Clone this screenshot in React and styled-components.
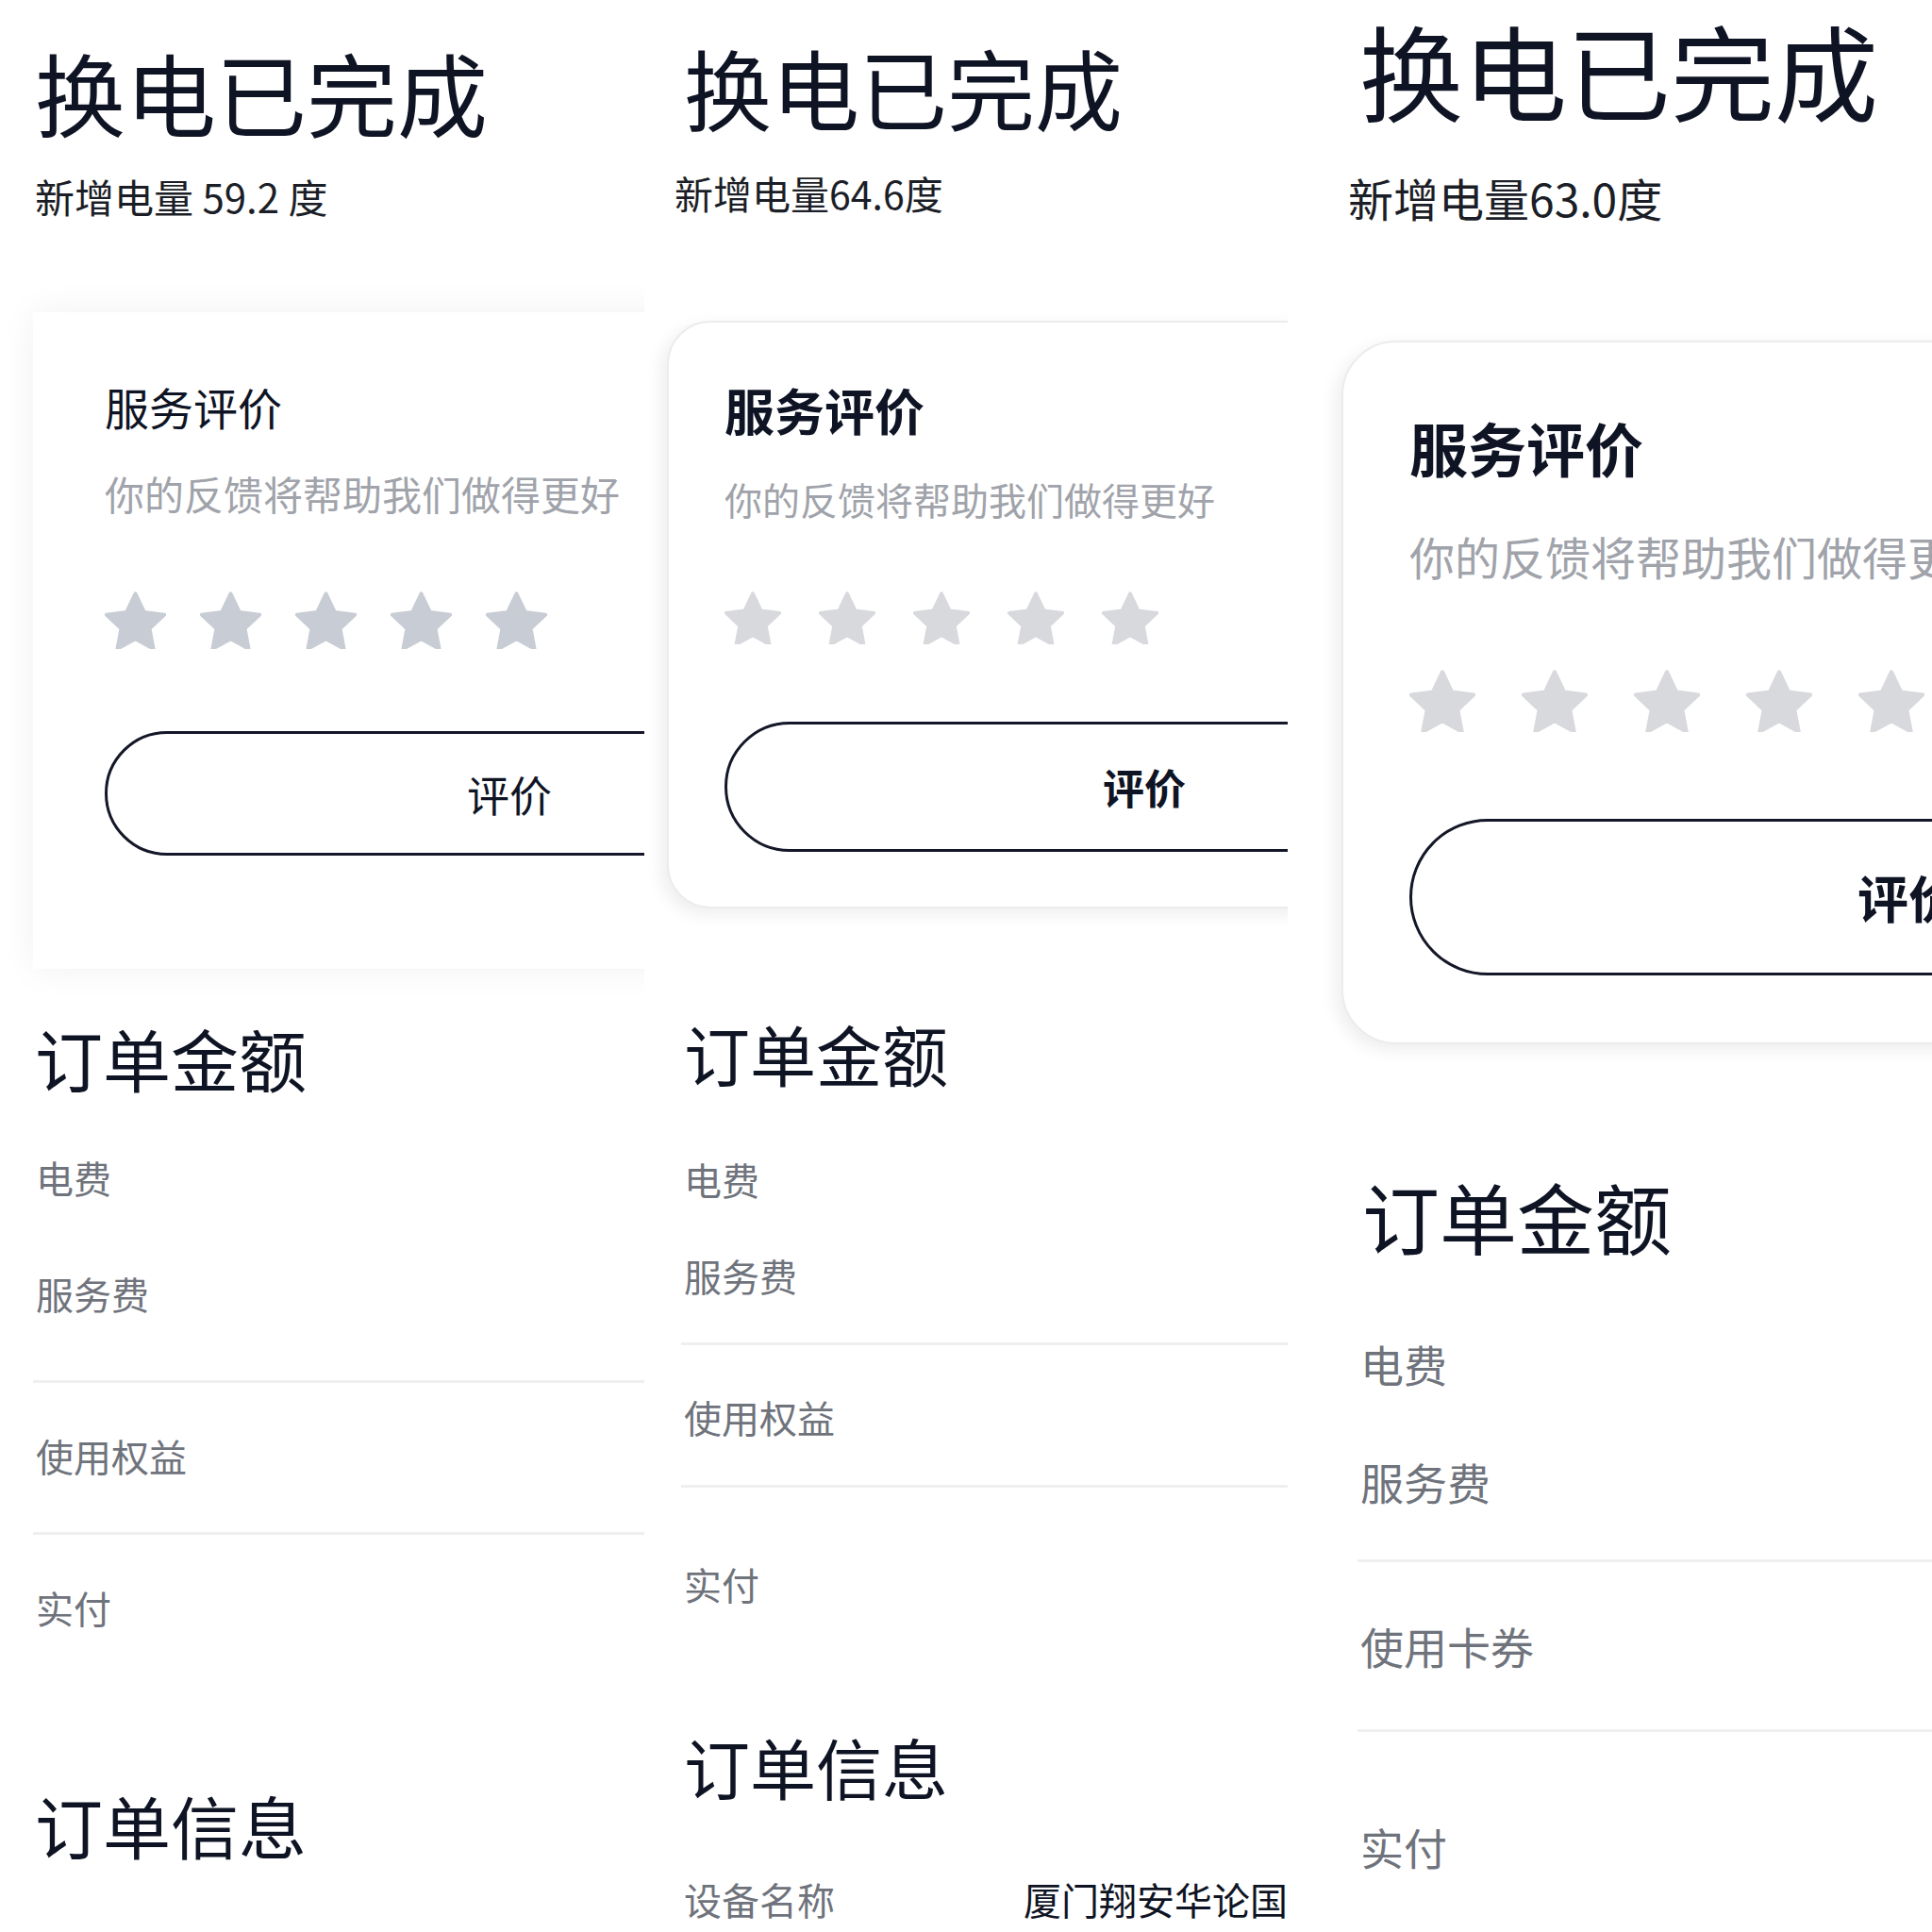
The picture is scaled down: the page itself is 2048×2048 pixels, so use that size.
import React from "react";
import styled, { createGlobalStyle } from "styled-components";

const GlobalStyle = createGlobalStyle`
  html, body {
    margin: 0;
    padding: 0;
    background: #ffffff;
  }
  body {
    font-family: "Noto Sans CJK SC", "Noto Sans", sans-serif;
    color: #0f1424;
  }
`;

const Page = styled.div`
  width: 2048px;
  height: 2048px;
  display: grid;
  grid-template-columns: 683px 682px 683px;
  background: #ffffff;
  overflow: hidden;
`;

const Column = styled.div`
  position: relative;
  overflow: hidden;
  height: 2048px;
  display: flex;
  flex-direction: column;
  align-items: flex-start;
`;

const Title = styled.h1`
  margin: ${(p) => p.$mt}px 0 0 ${(p) => p.$ml}px;
  font-size: ${(p) => p.$size}px;
  line-height: 1;
  font-weight: 400;
  white-space: nowrap;
  color: #0f1424;
`;

const Energy = styled.div`
  margin: ${(p) => p.$mt}px 0 0 ${(p) => p.$ml}px;
  font-size: ${(p) => p.$size}px;
  line-height: 1;
  white-space: nowrap;
  color: #1b1e26;
`;

const Card = styled.div`
  flex: none;
  box-sizing: border-box;
  width: ${(p) => p.$width}px;
  margin: ${(p) => p.$mt}px 0 0 ${(p) => p.$ml}px;
  padding: ${(p) => p.$pt}px ${(p) => p.$px}px ${(p) => p.$pb}px;
  background: #ffffff;
  border-radius: ${(p) => p.$radius}px;
  border: ${(p) => (p.$radius ? "2px solid #ececee" : "none")};
  box-shadow: ${(p) =>
    p.$radius
      ? "-6px 6px 18px rgba(0, 0, 0, 0.07)"
      : "0 0 36px rgba(0, 0, 0, 0.06)"};
  display: flex;
  flex-direction: column;
  align-items: flex-start;
`;

const CardTitle = styled.div`
  font-size: ${(p) => p.$size}px;
  line-height: 1;
  font-weight: ${(p) => (p.$bold ? 700 : 400)};
  color: #0f1424;
  white-space: nowrap;
`;

const Hint = styled.div`
  margin-top: ${(p) => p.$mt}px;
  font-size: ${(p) => p.$size}px;
  line-height: 1;
  color: #a0a3aa;
  white-space: nowrap;
`;

const Stars = styled.div`
  display: flex;
  gap: ${(p) => p.$gap}px;
  margin-top: ${(p) => p.$mt}px;
`;

const StarIcon = styled.svg`
  width: ${(p) => p.$size}px;
  height: ${(p) => p.$size * 0.94}px;
  display: block;
  fill: ${(p) => p.$color};
  stroke: ${(p) => p.$color};
`;

const RateButton = styled.button`
  margin-top: ${(p) => p.$mt}px;
  width: 100%;
  height: ${(p) => p.$height}px;
  border: 3px solid #141727;
  border-radius: 999px;
  background: #ffffff;
  font-family: "Noto Sans CJK SC", sans-serif;
  font-size: ${(p) => p.$size}px;
  font-weight: ${(p) => (p.$bold ? 700 : 400)};
  color: #0f1424;
  display: flex;
  align-items: center;
  justify-content: center;
  padding: 0;
`;

const SectionTitle = styled.h2`
  margin: ${(p) => p.$mt}px 0 0 ${(p) => p.$ml}px;
  font-size: ${(p) => p.$size}px;
  line-height: 1;
  font-weight: 400;
  color: #0f1424;
  white-space: nowrap;
`;

const Label = styled.div`
  margin: ${(p) => p.$mt}px 0 0 ${(p) => p.$ml}px;
  font-size: ${(p) => p.$size}px;
  line-height: 1;
  color: #6f737c;
  white-space: nowrap;
`;

const Divider = styled.div`
  flex: none;
  align-self: stretch;
  height: 3px;
  margin: ${(p) => p.$mt}px 0 0 ${(p) => p.$ml}px;
  background: #efeff1;
`;

const InfoRow = styled.div`
  display: flex;
  align-items: flex-start;
  margin: ${(p) => p.$mt}px 0 0 ${(p) => p.$ml}px;
  font-size: ${(p) => p.$size}px;
  line-height: 1;
  white-space: nowrap;
`;

const InfoKey = styled.span`
  width: ${(p) => p.$width}px;
  color: #6f737c;
`;

const InfoValue = styled.span`
  color: #0f1424;
`;

function Star({ size, color }) {
  return (
    <StarIcon
      $size={size}
      $color={color}
      viewBox="2.1 2.1 19.8 18.7"
      strokeWidth="1.2"
      strokeLinejoin="round"
    >
      <path d="M12 2.8l2.85 6 6.55.85-4.8 4.5 1.25 6.55L12 17.5l-5.85 3.2 1.25-6.55-4.8-4.5 6.55-.85z" />
    </StarIcon>
  );
}

const panels = [
  {
    title: { size: 96, mt: 49, ml: 37 },
    energy: { text: "新增电量 59.2 度", size: 42, mt: 42, ml: 37 },
    card: { mt: 102, ml: 35, width: 1010, pt: 76, px: 76, pb: 120, radius: 0 },
    cardTitle: { size: 47, bold: false },
    hint: { size: 42, mt: 48 },
    stars: { size: 65, gap: 36, mt: 83, color: "#c8ccd4" },
    button: { mt: 87, height: 132, size: 45, bold: false },
    amount: { size: 72, mt: 58, ml: 37 },
    labelSize: 40,
    labelMl: 38,
    rows: [
      { type: "label", text: "电费", mt: 71 },
      { type: "label", text: "服务费", mt: 83 },
      { type: "divider", mt: 72, ml: 35 },
      { type: "label", text: "使用权益", mt: 57 },
      { type: "divider", mt: 61, ml: 35 },
      { type: "label", text: "实付", mt: 57 },
      { type: "section", text: "订单信息", mt: 174, size: 72, ml: 37 },
    ],
  },
  {
    title: { size: 93, mt: 45, ml: 42 },
    energy: { text: "新增电量64.6度", size: 41, mt: 46, ml: 32 },
    card: { mt: 115, ml: 24, width: 1012, pt: 66, px: 59, pb: 58, radius: 46 },
    cardTitle: { size: 53, bold: true },
    hint: { size: 40, mt: 48 },
    stars: { size: 60, gap: 40, mt: 78, color: "#d8d9dd" },
    button: { mt: 82, height: 138, size: 44, bold: true },
    amount: { size: 70, mt: 119, ml: 42 },
    labelSize: 40,
    labelMl: 42,
    rows: [
      { type: "label", text: "电费", mt: 78 },
      { type: "label", text: "服务费", mt: 62 },
      { type: "divider", mt: 51, ml: 39 },
      { type: "label", text: "使用权益", mt: 56 },
      { type: "divider", mt: 52, ml: 39 },
      { type: "label", text: "实付", mt: 82 },
      { type: "section", text: "订单信息", mt: 139, size: 70, ml: 42 },
      {
        type: "info",
        key: "设备名称",
        value: "厦门翔安华论国际",
        mt: 85,
        keyWidth: 360,
      },
    ],
  },
  {
    title: { size: 110, mt: 18, ml: 76 },
    energy: { text: "新增电量63.0度", size: 48, mt: 57, ml: 64 },
    card: { mt: 128, ml: 57, width: 1202, pt: 80, px: 70, pb: 71, radius: 58 },
    cardTitle: { size: 62, bold: true },
    hint: { size: 48, mt: 60 },
    stars: { size: 70, gap: 49, mt: 97, color: "#d8d9dd" },
    button: { mt: 92, height: 166, size: 54, bold: true },
    amount: { size: 82, mt: 141, ml: 79 },
    labelSize: 46,
    labelMl: 77,
    rows: [
      { type: "label", text: "电费", mt: 92 },
      { type: "label", text: "服务费", mt: 79 },
      { type: "divider", mt: 60, ml: 74 },
      { type: "label", text: "使用卡券", mt: 65 },
      { type: "divider", mt: 66, ml: 74 },
      { type: "label", text: "实付", mt: 98 },
    ],
  },
];

function Panel({ cfg }) {
  const { title, energy, card, cardTitle, hint, stars, button, amount } = cfg;
  return (
    <Column>
      <Title $size={title.size} $mt={title.mt} $ml={title.ml}>
        换电已完成
      </Title>
      <Energy $size={energy.size} $mt={energy.mt} $ml={energy.ml}>
        {energy.text}
      </Energy>
      <Card
        $mt={card.mt}
        $ml={card.ml}
        $width={card.width}
        $pt={card.pt}
        $px={card.px}
        $pb={card.pb}
        $radius={card.radius}
      >
        <CardTitle $size={cardTitle.size} $bold={cardTitle.bold}>
          服务评价
        </CardTitle>
        <Hint $size={hint.size} $mt={hint.mt}>
          你的反馈将帮助我们做得更好
        </Hint>
        <Stars $gap={stars.gap} $mt={stars.mt}>
          {[0, 1, 2, 3, 4].map((i) => (
            <Star key={i} size={stars.size} color={stars.color} />
          ))}
        </Stars>
        <RateButton
          $mt={button.mt}
          $height={button.height}
          $size={button.size}
          $bold={button.bold}
        >
          评价
        </RateButton>
      </Card>
      <SectionTitle $size={amount.size} $mt={amount.mt} $ml={amount.ml}>
        订单金额
      </SectionTitle>
      {cfg.rows.map((row, i) => {
        if (row.type === "divider") {
          return <Divider key={i} $mt={row.mt} $ml={row.ml} />;
        }
        if (row.type === "section") {
          return (
            <SectionTitle key={i} $size={row.size} $mt={row.mt} $ml={row.ml}>
              {row.text}
            </SectionTitle>
          );
        }
        if (row.type === "info") {
          return (
            <InfoRow key={i} $size={cfg.labelSize} $mt={row.mt} $ml={cfg.labelMl}>
              <InfoKey $width={row.keyWidth}>{row.key}</InfoKey>
              <InfoValue>{row.value}</InfoValue>
            </InfoRow>
          );
        }
        return (
          <Label key={i} $size={cfg.labelSize} $mt={row.mt} $ml={cfg.labelMl}>
            {row.text}
          </Label>
        );
      })}
    </Column>
  );
}

export default function App() {
  return (
    <>
      <GlobalStyle />
      <Page>
        {panels.map((cfg, i) => (
          <Panel key={i} cfg={cfg} />
        ))}
      </Page>
    </>
  );
}
